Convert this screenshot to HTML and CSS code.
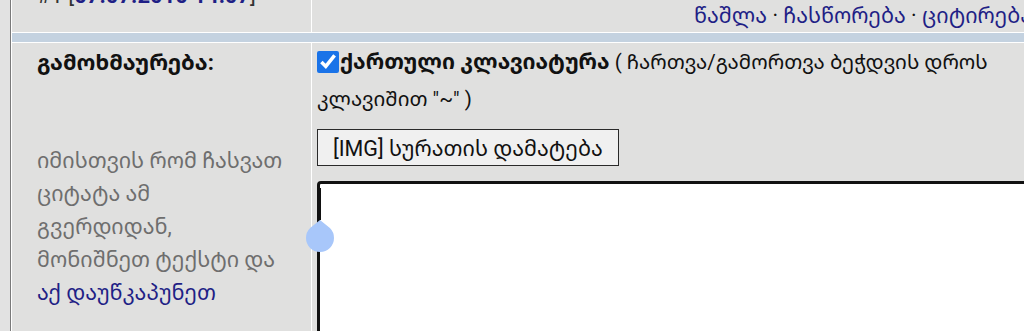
FILE: index.html
```html
<!DOCTYPE html>
<html lang="ka">
<head>
    <meta charset="UTF-8">
    <meta name="viewport" content="width=device-width, initial-scale=1.0">
    <title>გამოხმაურება</title>
    <link rel="stylesheet" href="styles.css">
</head>
<body>
    <div class="forum">
        <!-- წინა პოსტის ბოლო -->
        <div class="cell postInfo">
            <span>#1 [<a href="#">07.07.2010 14:07</a>]</span>
        </div>
        <div class="cell postTools">
            <a href="#">წაშლა</a> · <a href="#">ჩასწორება</a> · <a href="#">ციტირება</a>
        </div>
        <div class="sep"></div>

        <!-- პასუხის ფორმა -->
        <div class="cell replyLabel">
            <b class="title">გამოხმაურება:</b>
            <p class="hint">იმისთვის რომ ჩასვათ ციტატა ამ გვერდიდან, მონიშნეთ ტექსტი და <a href="#">აქ დაუწკაპუნეთ</a></p>
        </div>
        <div class="cell replyForm">
            <form>
                <label class="geoKbd">
                    <input type="checkbox" checked><b>ქართული კლავიატურა</b> ( ჩართვა/გამორთვა ბეჭდვის დროს კლავიშით "~" )
                </label>
                <button type="button" class="imgBtn">[IMG] სურათის დამატება</button>
                <div class="editor">
                    <textarea name="message"></textarea>
                    <svg class="caret" width="30" height="66" viewBox="0 0 30 66">
                        <rect x="14" y="0" width="2" height="32" fill="#111"/>
                        <path d="M15 32 L24.9 40.1 A14 14 0 1 1 5.1 40.1 Z" fill="#a8c7fa"/>
                    </svg>
                </div>
            </form>
        </div>
    </div>
</body>
</html>
```

FILE: styles.css
```css
html, body{
    margin: 0;
    height: 100%;
    overflow: hidden;
}
body{
    background: #e2e2e2;
    font-family: Roboto, "Noto Sans Georgian", "DejaVu Sans", sans-serif;
    font-size: 20.5px;
    color: #111;
}
a{
    color: #1f1f86;
    text-decoration: none;
}
.forum{
    width: 1030px;
    margin: -48px 0 0 10px;
    border-left: 1px solid #7a7a7a;
    padding-left: 1px;
    background: #fff;
    display: grid;
    grid-template-columns: 299px 1fr;
    gap: 1px;
}
.cell{
    background: #e0e0df;
}
.sep{
    grid-column: 1 / 3;
    height: 9px;
    background: #c4d2e0;
}
/* წინა პოსტი */
.postInfo{
    height: 80px;
    box-sizing: border-box;
    padding: 29px 0 0 25px;
    color: #333;
    line-height: 30px;
    font-size: 22px;
}
.postInfo a{
    font-weight: bold;
}
.postTools{
    height: 80px;
    box-sizing: border-box;
    padding: 49px 10px 0 0;
    text-align: right;
    line-height: 30px;
    font-size: 21.5px;
    white-space: nowrap;
}
/* პასუხი */
.replyLabel{
    padding: 0 10px 40px 25px;
}
.title{
    display: block;
    line-height: 40px;
    font-size: 22px;
}
.hint{
    margin: 61px 0 0;
    width: 251px;
    font-size: 21.5px;
    color: #6e6e6e;
    line-height: 33px;
}
.hint a{
    white-space: nowrap;
}
.replyForm{
    padding: 0 0 0 5px;
}
.geoKbd{
    display: block;
    max-width: 690px;
    line-height: 37px;
}
.geoKbd b{
    font-size: 21.5px;
}
.geoKbd input{
    width: 22px;
    height: 22px;
    margin: 0 1px 0 0;
    vertical-align: -4px;
    accent-color: #1a73e8;
}
.imgBtn{
    display: block;
    margin-top: 11px;
    height: 37px;
    padding: 0 15px;
    font: inherit;
    font-size: 21.5px;
    color: #111;
    background: #f0f0f0;
    border: 1px solid #2a2a2a;
    border-radius: 0;
}
.editor{
    position: relative;
    margin-top: 15px;
}
.editor textarea{
    display: block;
    width: 100%;
    height: 200px;
    box-sizing: border-box;
    border: 3px solid #111;
    border-radius: 4px;
    background: #fff;
    resize: none;
}
.caret{
    position: absolute;
    left: -12px;
    top: 7px;
}
```
